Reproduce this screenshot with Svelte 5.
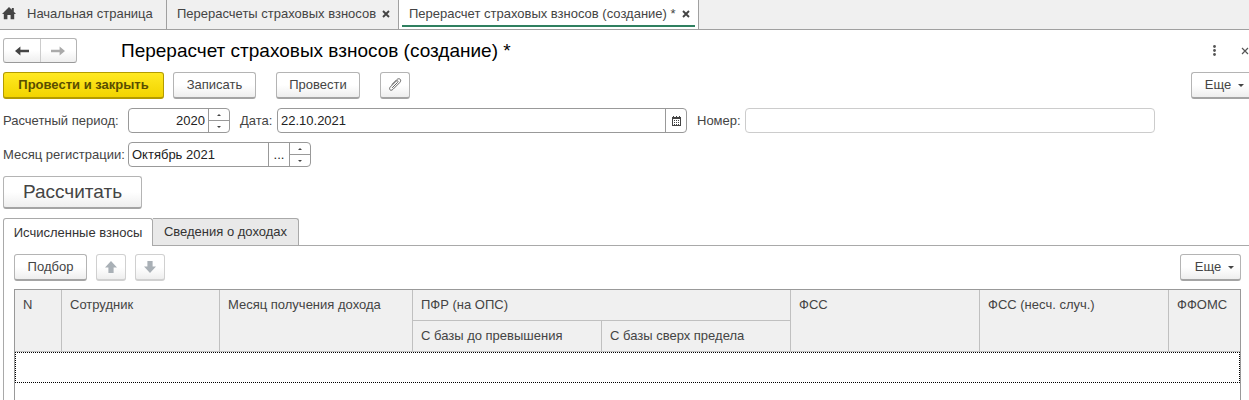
<script lang="ts">

    interface OpenWindow {
        title: string;
        active: boolean;
    }

    const windows: OpenWindow[] = [
        { title: "Перерасчеты страховых взносов", active: false },
        { title: "Перерасчет страховых взносов (создание) *", active: true },
    ];

    const pages = ["Исчисленные взносы", "Сведения о доходах"];

    let currentPage = $state(0);
    let period = $state("2020");
    let date = $state("22.10.2021");
    let number = $state("");
    let month = $state("Октябрь 2021");

</script>

{#snippet stepper()}
    <span class="stepper">
        <button type="button" aria-label="Увеличить">
            <svg width="4" height="2" viewBox="0 0 4 2"><path d="M0 2L2 0L4 2Z" fill="#444" /></svg>
        </button>
        <button type="button" aria-label="Уменьшить">
            <svg width="4" height="2" viewBox="0 0 4 2"><path d="M0 0L2 2L4 0Z" fill="#444" /></svg>
        </button>
    </span>
{/snippet}

{#snippet cross()}
    <svg width="8" height="8" viewBox="0 0 8 8"><path d="M1 1L7 7M7 1L1 7" stroke="#444" stroke-width="1.9" /></svg>
{/snippet}

{#snippet more()}
    <button type="button" class="btn more">
        Еще
        <svg width="6" height="3" viewBox="0 0 6 3"><path d="M0 0H6L3 3Z" fill="#444" /></svg>
    </button>
{/snippet}

<div class="app">

    <nav class="windows">
        <a class="window home" href="#home">
            <svg width="14" height="13" viewBox="0 0 14 13">
                <path d="M7 0L9.8 2.8V1H11.8V4.8L14 7H12.2V12.2H8.6V8H5.4V12.2H1.8V7H0Z" fill="#444" />
            </svg>
            Начальная страница
        </a>
        {#each windows as w}
            <div class="window" class:active={w.active}>
                <a href="#window">{w.title}</a>
                <button type="button" aria-label="Закрыть вкладку">{@render cross()}</button>
            </div>
        {/each}
    </nav>

    <main>

        <header>
            <div class="history">
                <button type="button" aria-label="Назад">
                    <svg width="14" height="10" viewBox="0 0 14 10"><path d="M0 5L5.4 0.4V3.8H14V6.2H5.4V9.6Z" fill="#444" /></svg>
                </button>
                <button type="button" aria-label="Вперед">
                    <svg width="14" height="10" viewBox="0 0 14 10"><path d="M14 5L8.6 0.4V3.8H0V6.2H8.6V9.6Z" fill="#aaa" /></svg>
                </button>
            </div>
            <h1>Перерасчет страховых взносов (создание) *</h1>
            <button type="button" class="plain" aria-label="Меню">
                <svg width="3" height="11" viewBox="0 0 3 11" fill="#555">
                    <circle cx="1.5" cy="1.5" r="1.4" /><circle cx="1.5" cy="5.5" r="1.4" /><circle cx="1.5" cy="9.5" r="1.4" />
                </svg>
            </button>
            <button type="button" class="plain" aria-label="Закрыть">
                <svg width="8" height="8" viewBox="0 0 8 8"><path d="M1 1L7 7M7 1L1 7" stroke="#555" stroke-width="1.2" /></svg>
            </button>
        </header>

        <div class="commands">
            <button type="button" class="btn primary">Провести и закрыть</button>
            <button type="button" class="btn save">Записать</button>
            <button type="button" class="btn post">Провести</button>
            <button type="button" class="btn icon" aria-label="Присоединенные файлы">
                <svg width="14" height="14" viewBox="0 0 14 14" fill="none" stroke="#666" stroke-width="1" stroke-linecap="round">
                    <path d="M4.4 9.6L9.6 4.4C10.8 3.2 9.4 1.9 8.2 3.1L2.4 8.9C0.2 11.1 2.7 13.6 4.9 11.4L11.6 4.7C14.4 1.9 11.2 -0.8 8.6 1.8L4.2 6.2" />
                </svg>
            </button>
            {@render more()}
        </div>

        <div class="fields">
            <label class="first" for="period">Расчетный период:</label>
            <span class="field period">
                <input id="period" bind:value={period} />
                {@render stepper()}
            </span>
            <label class="date-label" for="date">Дата:</label>
            <span class="field wide">
                <input id="date" bind:value={date} />
                <button type="button" class="pick" aria-label="Выбрать дату">
                    <svg width="9" height="10" viewBox="0 0 9 10" shape-rendering="crispEdges">
                        <path d="M0 1H1V0H2V1H4V0H5V1H7V0H8V1H9V10H0Z" fill="#444" />
                        <path d="M1 3H8V9H1Z" fill="#fff" />
                        <path d="M2 4.5H7M2 6.5H7M2 8.5H7" stroke="#444" stroke-dasharray="1 1" />
                    </svg>
                </button>
            </span>
            <label class="number-label" for="number">Номер:</label>
            <span class="field wide muted">
                <input id="number" bind:value={number} />
            </span>
        </div>

        <div class="fields">
            <label class="first" for="month">Месяц регистрации:</label>
            <span class="field month">
                <input id="month" bind:value={month} />
                <button type="button" class="pick" aria-label="Выбрать месяц">...</button>
                {@render stepper()}
            </span>
        </div>

        <button type="button" class="btn calculate">Рассчитать</button>

        <div class="pages" role="tablist">
            {#each pages as page, i}
                <button
                    type="button"
                    role="tab"
                    aria-selected={currentPage === i}
                    class:current={currentPage === i}
                    onclick={() => (currentPage = i)}>{page}</button>
            {/each}
        </div>

        <section class="panel">
            <div class="toolbar">
                <button type="button" class="btn pickup">Подбор</button>
                <button type="button" class="btn icon" disabled aria-label="Переместить вверх">
                    <svg width="12" height="12" viewBox="0 0 12 12"><path d="M6 0L12 6.4H8.6V12H3.4V6.4H0Z" fill="#a9b0b6" /></svg>
                </button>
                <button type="button" class="btn icon" disabled aria-label="Переместить вниз">
                    <svg width="12" height="12" viewBox="0 0 12 12"><path d="M6 12L12 5.6H8.6V0H3.4V5.6H0Z" fill="#a9b0b6" /></svg>
                </button>
                {@render more()}
            </div>

            <div class="grid">
                <table>
                    <colgroup>
                        <col class="c-n" />
                        <col class="c-employee" />
                        <col class="c-month" />
                        <col class="c-sum" />
                        <col class="c-sum" />
                        <col class="c-sum" />
                        <col class="c-sum" />
                        <col />
                    </colgroup>
                    <thead>
                        <tr>
                            <th rowspan="2">N</th>
                            <th rowspan="2">Сотрудник</th>
                            <th rowspan="2">Месяц получения дохода</th>
                            <th colspan="2">ПФР (на ОПС)</th>
                            <th rowspan="2">ФСС</th>
                            <th rowspan="2">ФСС (несч. случ.)</th>
                            <th rowspan="2">ФФОМС</th>
                        </tr>
                        <tr>
                            <th>С базы до превышения</th>
                            <th>С базы сверх предела</th>
                        </tr>
                    </thead>
                    <tbody>
                        <tr>
                            <td colspan="8"></td>
                        </tr>
                    </tbody>
                </table>
            </div>
        </section>

    </main>

</div>

<style>

    :global(body) {
        background: #fff;
    }

    .app {
        display: flex;
        flex-direction: column;
        min-height: 100vh;
        overflow: hidden;
        color: #444;
        font: 13px/16px "Liberation Sans", Arial, sans-serif;
    }

    button,
    input {
        box-sizing: border-box;
        margin: 0;
        padding: 0;
        border: 0;
        background: none;
        color: inherit;
        font: inherit;
        white-space: nowrap;
    }

    a {
        color: inherit;
        text-decoration: none;
    }

    svg {
        display: block;
        flex: none;
    }

    .windows {
        display: flex;
        height: 29px;
        background: #f0f0f0;
        border-bottom: 1px solid #a0a0a0;
    }

    .window {
        box-sizing: border-box;
        display: flex;
        align-items: center;
        justify-content: space-between;
        width: 232px;
        padding: 0 8px 2px 10px;
        border-right: 1px solid #a0a0a0;
        white-space: nowrap;
    }

    .window.home {
        justify-content: flex-start;
        gap: 11px;
        width: 167px;
        padding-left: 2px;
    }

    .window.active {
        position: relative;
        width: 300px;
        background: #fff;
    }

    .window.active::after {
        content: "";
        position: absolute;
        left: 3px;
        right: 3px;
        bottom: 2px;
        height: 2px;
        background: #2f8060;
    }

    main {
        display: flex;
        flex: 1;
        flex-direction: column;
        padding: 8px 0 0 3px;
    }

    header {
        display: flex;
        align-items: center;
        height: 25px;
    }

    .history {
        box-sizing: border-box;
        display: flex;
        width: 74px;
        height: 25px;
        border: 1px solid #b4b4b4;
        border-bottom-color: #999;
        border-radius: 3px;
        background: linear-gradient(#fff 50%, #eee);
    }

    .history button {
        display: flex;
        flex: 1;
        align-items: center;
        justify-content: center;
    }

    .history button + button {
        border-left: 1px solid #ccc;
    }

    h1 {
        flex: 1;
        margin: 0 0 0 44px;
        color: #000;
        font-size: 19px;
        font-weight: normal;
        line-height: 24px;
    }

    .plain {
        display: flex;
        width: 22px;
        justify-content: flex-end;
    }

    .plain + .plain {
        width: 33px;
    }

    .btn {
        display: flex;
        align-items: center;
        justify-content: center;
        height: 27px;
        border: 1px solid #b4b4b4;
        border-bottom: 2px solid #a4a4a4;
        border-radius: 3px;
        background: linear-gradient(#fff 50%, #eee);
    }

    .btn:disabled {
        border-color: #d0d0d0;
    }

    .commands {
        display: flex;
        margin-top: 9px;
    }

    .primary {
        width: 161px;
        border-color: #b39b00;
        background: linear-gradient(#ffe922, #f2d400);
        color: #594d00;
        font-weight: bold;
    }

    .save {
        width: 83px;
        margin-left: 9px;
    }

    .post {
        width: 84px;
        margin: 0 20px;
    }

    .icon {
        width: 30px;
    }

    .more {
        gap: 7px;
        width: 61px;
        margin-left: auto;
        padding-left: 8px;
    }

    /* the form's own menu button runs to the window edge */
    .commands .more {
        width: 58px;
        border-right: 0;
        border-radius: 3px 0 0 3px;
    }

    .fields {
        display: flex;
        align-items: center;
        margin-top: 9px;
        white-space: nowrap;
    }

    .first {
        width: 125px;
    }

    .field {
        box-sizing: border-box;
        display: flex;
        height: 25px;
        border: 1px solid #999;
        border-radius: 4px;
        color: #222;
    }

    .field input {
        flex: 1;
        min-width: 0;
        padding: 0 3px;
        outline: none;
    }

    .field.muted {
        border-color: #ccc;
    }

    .period {
        width: 102px;
    }

    .period input {
        text-align: right;
    }

    .month {
        width: 183px;
    }

    .wide {
        width: 410px;
    }

    .date-label {
        width: 37px;
        margin-left: 10px;
    }

    .number-label {
        width: 48px;
        margin-left: 10px;
    }

    .pick {
        display: flex;
        align-items: center;
        justify-content: center;
        width: 21px;
        border-left: 1px solid #999;
    }

    .stepper {
        display: flex;
        flex-direction: column;
        width: 20px;
        border-left: 1px solid #999;
    }

    .stepper button {
        display: flex;
        flex: 1;
        align-items: center;
        justify-content: center;
    }

    .stepper button + button {
        border-top: 1px solid #999;
    }

    .calculate {
        width: 139px;
        height: 33px;
        margin-top: 9px;
        font-size: 19px;
    }

    .pages {
        display: flex;
        margin-top: 9px;
    }

    .pages button {
        width: 146px;
        height: 27px;
        border: 1px solid #a9a9a9;
        border-bottom: 0;
        border-left: 0;
        border-radius: 0 3px 0 0;
        background: #e9e9e9;
        color: #333;
    }

    .pages button:first-child {
        width: 150px;
        border-left: 1px solid #a9a9a9;
        border-radius: 3px 3px 0 0;
    }

    .pages .current {
        position: relative;
        height: 28px;
        margin-bottom: -1px;
        background: #fff;
    }

    .panel {
        display: flex;
        flex: 1;
        flex-direction: column;
        padding: 8px 8px 0 10px;
        border-top: 1px solid #a9a9a9;
        border-left: 1px solid #a9a9a9;
    }

    .toolbar {
        display: flex;
        gap: 9px;
        margin-bottom: 8px;
    }

    .pickup {
        width: 73px;
    }

    .grid {
        flex: 1;
        border: 1px solid #999;
        border-bottom: 0;
    }

    table {
        width: 100%;
        table-layout: fixed;
        border-collapse: separate;
        border-spacing: 0;
    }

    .c-n {
        width: 47px;
    }

    .c-employee {
        width: 158px;
    }

    .c-month {
        width: 193px;
    }

    .c-sum {
        width: 189px;
    }

    th {
        box-sizing: border-box;
        height: 31px;
        padding: 7px 0 7px 8px;
        border-right: 1px solid #c0c0c0;
        border-bottom: 1px solid #c0c0c0;
        background: #f0f0f0;
        font-weight: normal;
        text-align: left;
        vertical-align: top;
        white-space: nowrap;
    }

    th:last-child[rowspan] {
        border-right: 0;
    }

    td {
        box-sizing: border-box;
        height: 31px;
        border: 1px dotted #000;
    }

</style>
